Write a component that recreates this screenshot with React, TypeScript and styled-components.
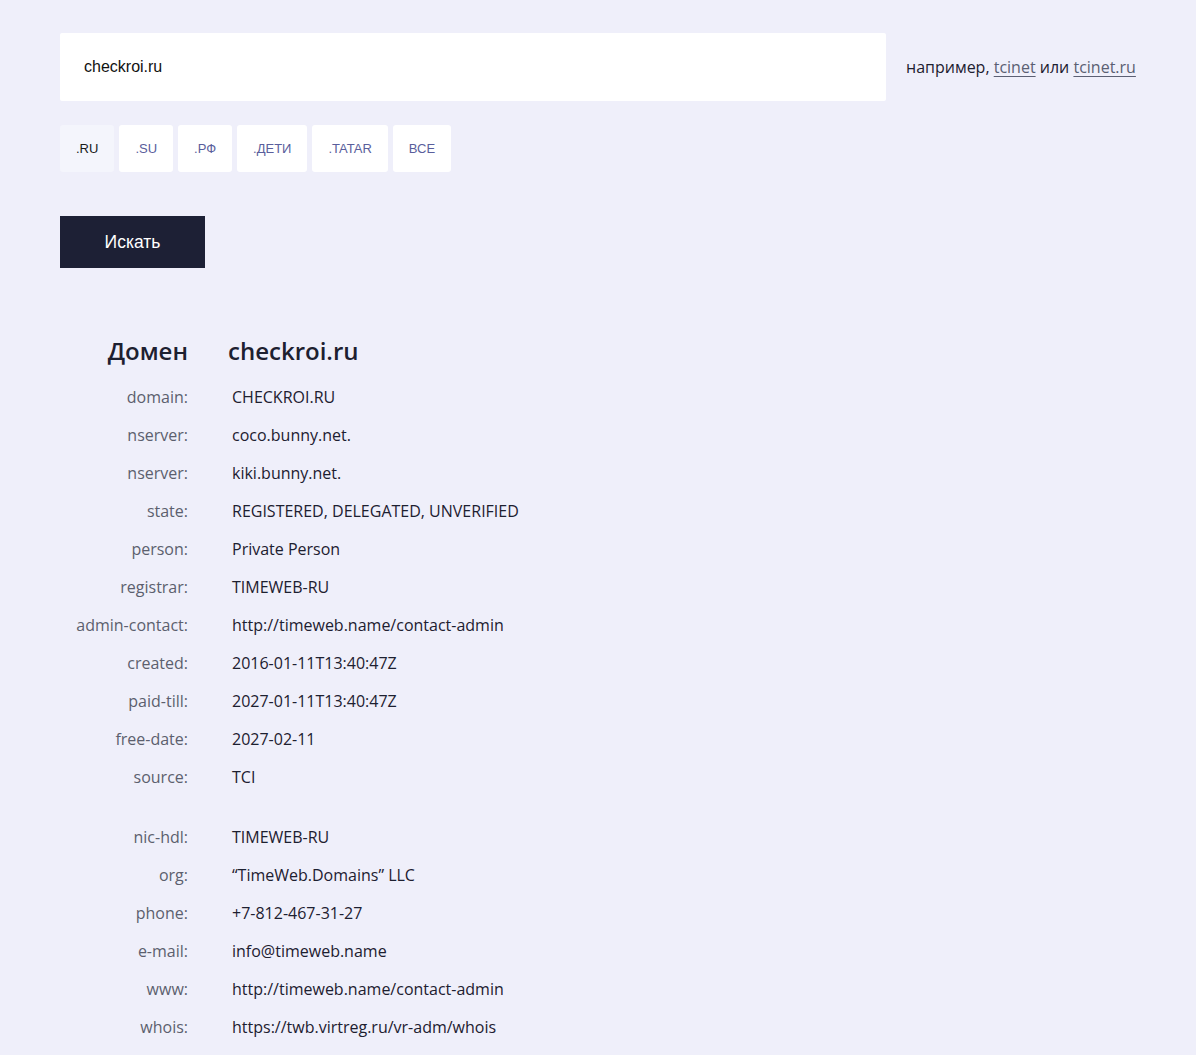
import React, { useState } from 'react';
import styled, { createGlobalStyle } from 'styled-components';

const GlobalStyle = createGlobalStyle`
	html, body {
		margin: 0;
		padding: 0;
		background: #efeffa;
	}
	body {
		font-family: 'Open Sans', 'Liberation Sans', sans-serif;
		color: #1d2030;
	}
`;

const zones = ['.RU', '.SU', '.РФ', '.ДЕТИ', '.TATAR', 'ВСЕ'];

type Row = { label: string; value: string; spaced?: boolean };

const rows: Row[] = [
	{ label: 'domain', value: 'CHECKROI.RU' },
	{ label: 'nserver', value: 'coco.bunny.net.' },
	{ label: 'nserver', value: 'kiki.bunny.net.' },
	{ label: 'state', value: 'REGISTERED, DELEGATED, UNVERIFIED' },
	{ label: 'person', value: 'Private Person' },
	{ label: 'registrar', value: 'TIMEWEB-RU' },
	{ label: 'admin-contact', value: 'http://timeweb.name/contact-admin' },
	{ label: 'created', value: '2016-01-11T13:40:47Z' },
	{ label: 'paid-till', value: '2027-01-11T13:40:47Z' },
	{ label: 'free-date', value: '2027-02-11' },
	{ label: 'source', value: 'TCI' },
	{ label: 'nic-hdl', value: 'TIMEWEB-RU', spaced: true },
	{ label: 'org', value: '“TimeWeb.Domains” LLC' },
	{ label: 'phone', value: '+7-812-467-31-27' },
	{ label: 'e-mail', value: 'info@timeweb.name' },
	{ label: 'www', value: 'http://timeweb.name/contact-admin' },
	{ label: 'whois', value: 'https://twb.virtreg.ru/vr-adm/whois' },
];

export default function App() {
	const [query, setQuery] = useState('checkroi.ru');
	const [zone, setZone] = useState(0);

	return (
		<Page>
			<GlobalStyle />
			<SearchRow>
				<SearchInput value={query} onChange={(e) => setQuery(e.target.value)} />
				<Hint>
					например, <HintLink href="#">tcinet</HintLink> или{' '}
					<HintLink href="#">tcinet.ru</HintLink>
				</Hint>
			</SearchRow>
			<Zones>
				{zones.map((z, i) => (
					<ZoneTab key={z} $active={i === zone} onClick={() => setZone(i)}>
						{z}
					</ZoneTab>
				))}
			</Zones>
			<SubmitButton>Искать</SubmitButton>

			<Result>
				<Heading>
					<HeadingLabel>Домен</HeadingLabel>
					<HeadingValue>checkroi.ru</HeadingValue>
				</Heading>
				<Table>
					{rows.map((r, i) => (
						<React.Fragment key={i}>
							<Label $spaced={r.spaced}>{r.label}:</Label>
							<Value $spaced={r.spaced}>{r.value}</Value>
						</React.Fragment>
					))}
				</Table>
			</Result>
		</Page>
	);
}

const Page = styled.div`
	padding: 33px 60px 40px;
`;

const SearchRow = styled.div`
	display: flex;
	align-items: center;
	gap: 20px;
`;

const SearchInput = styled.input`
	width: 826px;
	height: 68px;
	box-sizing: border-box;
	border: none;
	border-radius: 2px;
	background: #fff;
	padding: 0 24px;
	font-family: 'Liberation Sans', Arial, sans-serif;
	font-size: 16px;
	color: #111;
	outline: none;
`;

const Hint = styled.div`
	font-size: 16px;
	color: #1d2030;
	white-space: nowrap;
`;

const HintLink = styled.a`
	color: #5b5f73;
	text-decoration: underline;
	text-underline-offset: 3px;
`;

const Zones = styled.div`
	display: flex;
	gap: 5px;
	margin-top: 24px;
`;

const ZoneTab = styled.button<{ $active?: boolean }>`
	height: 47px;
	padding: 0 16px;
	border: none;
	border-radius: 3px;
	background: ${(p) => (p.$active ? '#f4f5fc' : '#fff')};
	color: ${(p) => (p.$active ? '#1a1a1a' : '#5a5e9c')};
	font-family: 'Liberation Sans', Arial, sans-serif;
	font-size: 13px;
	cursor: pointer;
`;

const SubmitButton = styled.button`
	display: block;
	margin-top: 44px;
	width: 145px;
	height: 52px;
	border: none;
	background: #1d2035;
	color: #fff;
	font-family: 'Liberation Sans', Arial, sans-serif;
	font-size: 17.5px;
	cursor: pointer;
`;

const Result = styled.div`
	margin-top: 66px;
`;

const Heading = styled.div`
	display: grid;
	grid-template-columns: 128px auto;
	column-gap: 40px;
	align-items: center;
	font-size: 24px;
	font-weight: 600;
	color: #1d2030;
	line-height: 34px;
`;

const HeadingLabel = styled.div`
	text-align: right;
`;

const HeadingValue = styled.div``;

const Table = styled.div`
	display: grid;
	grid-template-columns: 128px auto;
	column-gap: 44px;
	row-gap: 16px;
	margin-top: 18px;
	font-size: 16px;
	line-height: 22px;
	justify-content: start;
`;

const Label = styled.div<{ $spaced?: boolean }>`
	text-align: right;
	color: #5c5f6e;
	margin-top: ${(p) => (p.$spaced ? '22px' : '0')};
`;

const Value = styled.div<{ $spaced?: boolean }>`
	color: #1d2030;
	margin-top: ${(p) => (p.$spaced ? '22px' : '0')};
`;
